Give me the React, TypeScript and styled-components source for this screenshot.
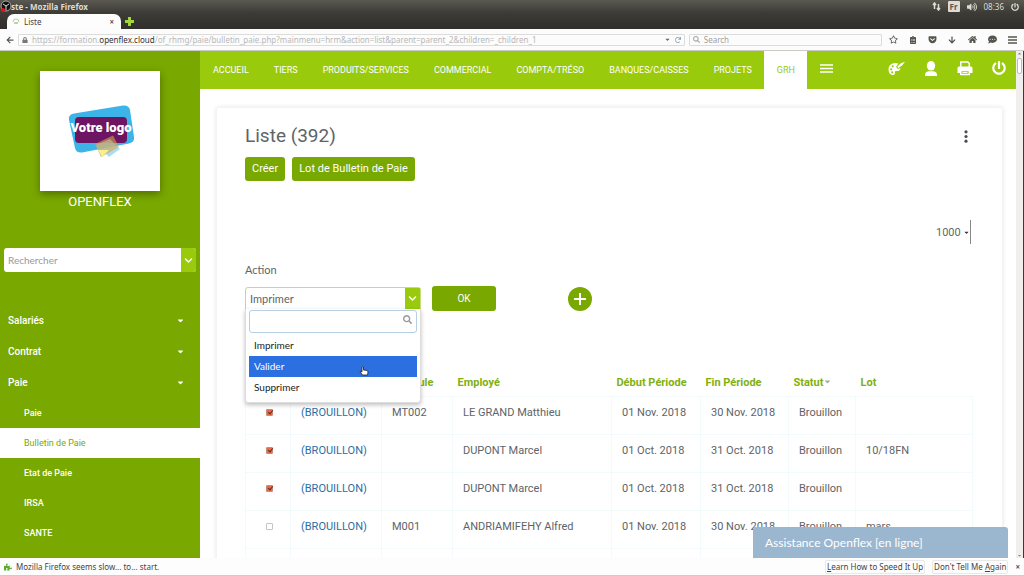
import React from "react";
import styled, { createGlobalStyle, css } from "styled-components";
import { FaArrowLeft, FaLock, FaSearch, FaRegStar, FaClipboardList, FaGetPocket, FaArrowDown, FaHome, FaPowerOff, FaVolumeUp, FaChevronDown, FaPlus, FaRedo, FaCaretDown, FaCaretUp, FaCommentDots, FaPuzzlePiece } from "react-icons/fa";

const green = "#79a800";
const lime = "#9aca0c";
const ui = `"Noto Sans", "Open Sans", sans-serif`;
const humanist = `Lato, "Open Sans", sans-serif`;

const Global = createGlobalStyle`
  * { box-sizing: border-box; }
  html, body { margin: 0; height: 100%; }
  #root { height: 100%; }
  body { font-family: Roboto, sans-serif; font-size: 11px; color: #5d6468; background: #fff; overflow: hidden; }
  button, input, select { font: inherit; color: inherit; margin: 0; padding: 0; border: 0; background: none; }
  button, select { cursor: pointer; }
  ul { list-style: none; margin: 0; padding: 0; }
  a { color: inherit; text-decoration: none; }
  svg { display: block; flex: none; }
`;

const Window = styled.div`
  height: 100vh;
  display: flex;
  flex-direction: column;
`;

/* Browser chrome */
const Titlebar = styled.header`
  background: linear-gradient(#5a5851, #3c3b36);
  color: #dfdbd2;
  display: flex;
  align-items: center;
  justify-content: space-between;
  height: 13px;
  padding: 0 5px 0 0;
  font: bold 8px/13px ${ui};
`;
const WindowTitle = styled.div`
  display: flex;
  align-items: center;
`;
const Indicators = styled.div`
  display: flex;
  align-items: center;
  gap: 7px;
  font-weight: 400;
`;
const Lang = styled.span`
  background: #dfdbd2;
  color: #555;
  border-radius: 1px;
  padding: 0 2px;
  font: bold 8px/11px ${ui};
`;
const TabStrip = styled.div`
  background: linear-gradient(#3c3b36, #302f2b);
  display: flex;
  align-items: center;
  gap: 4px;
  height: 16px;
  padding-left: 7px;
`;
const BrowserTab = styled.div`
  background: #fdfdfd;
  color: #444;
  border-radius: 7px 7px 0 0;
  display: flex;
  align-items: center;
  gap: 4px;
  width: 114px;
  height: 15px;
  margin-top: 1px;
  padding: 0 7px 0 5px;
  font: 8px/14px ${ui};
  span { flex: 1; }
`;
const Close = styled.button`
  font: bold 8px/10px ${ui};
  color: #555;
`;
const NavBar = styled.div`
  background: #fcfcfc;
  border-bottom: 1px solid #c9cbc4;
  display: flex;
  align-items: center;
  gap: 4px;
  height: 22px;
  padding: 0 7px 0 6px;
  color: #55554f;
`;
const Field = styled.label<{ $grow: number }>`
  flex: ${(p) => p.$grow} 1 0;
  display: flex;
  align-items: center;
  gap: 4px;
  height: 12px;
  border: 1px solid #dcdcdc;
  border-radius: 1px;
  padding: 0 3px;
  color: #a5a5a5;
  font: 8px/10px ${ui};
  white-space: nowrap;
  input { flex: 1; min-width: 0; outline: 0; }
  input::placeholder { color: #a0a0a0; opacity: 1; }
`;
const Url = styled.span`
  flex: 1;
  color: #b8b8b8;
  b { font-weight: 400; color: #333; }
`;
const Tools = styled.div`
  display: flex;
  justify-content: space-between;
  align-items: center;
  width: 128px;
  margin-left: 3px;
`;

/* Page */
const Page = styled.div`
  flex: 1;
  min-height: 0;
  display: flex;
  border-right: 1px solid #3a3935;
`;
const Sidebar = styled.aside`
  width: 200px;
  flex: none;
  overflow: hidden;
  background: ${green};
  color: #fff;
`;
const LogoCard = styled.div`
  width: 120px;
  margin: 20px auto 0;
  background: #fff;
  box-shadow: 0 3px 8px rgba(0, 0, 0, 0.35);
`;
const Brand = styled.div`
  text-align: center;
  font-size: 13px;
  line-height: 21px;
`;
const SearchBox = styled.div`
  display: flex;
  height: 24px;
  margin: 36px 4px 33px 4px;
  border-radius: 3px;
  overflow: hidden;
  background: #fff;
  input { flex: 1; min-width: 0; padding: 0 4px; font: 10px/24px ${humanist}; outline: 0; color: #777; }
  input::placeholder { color: #999; opacity: 1; }
`;
const Chevron = styled.button`
  width: 15px;
  background: ${lime};
  color: #fff;
  display: grid;
  place-items: center;
`;
const MenuItem = styled.button`
  display: flex;
  width: 100%;
  align-items: center;
  justify-content: space-between;
  padding: 0 15px 0 8px;
  font-size: 10px;
  font-weight: 500;
  line-height: 31px;
`;
const SubLink = styled.a<{ $active?: boolean }>`
  display: block;
  padding-left: 24px;
  font-size: 9px;
  font-weight: 500;
  line-height: 30px;
  ${(p) => p.$active && css`background: #fff; color: ${green}; font-weight: 400;`}
`;

const Main = styled.div`
  flex: 1;
  min-width: 0;
  display: flex;
  flex-direction: column;
  position: relative;
  overflow: hidden;
`;
const TopBar = styled.nav`
  flex: none;
  display: flex;
  align-items: stretch;
  height: 38px;
  background: ${lime};
  color: #fff;
  padding-right: 10px;
`;
const TopLink = styled.a<{ $active?: boolean }>`
  padding: 0 12px 0 13px;
  font-size: 9px;
  line-height: 38px;
  white-space: nowrap;
  ${(p) => p.$active && css`background: #fff; color: ${lime};`}
`;
const IconButton = styled.button`
  display: grid;
  place-items: center;
`;
const Burger = styled(IconButton)`
  margin: 0 auto 4px 13px;
`;
const TopIcons = styled.div`
  display: flex;
  align-items: center;
  gap: 19px;
  margin-bottom: 4px;
`;
const Card = styled.main`
  flex: 1;
  margin: 18px 13px 0 16px;
  padding: 15px 29px 0 28px;
  border: 1px solid #f4f4f6;
  border-bottom: 0;
  border-radius: 3px 3px 0 0;
  box-shadow: 0 0 4px rgba(60, 60, 90, 0.12);
`;
const CardHead = styled.div`
  display: flex;
  align-items: center;
  justify-content: space-between;
  h1 { margin: 0; font-size: 19px; font-weight: 400; line-height: 26px; }
`;
const Buttons = styled.div`
  display: flex;
  gap: 7px;
  margin-top: 8px;
`;
const Button = styled.button<{ $wide?: boolean }>`
  background: ${green};
  color: #fff;
  border-radius: 3px;
  padding: 0 7px;
  font-size: 11px;
  line-height: 24px;
  ${(p) => p.$wide && css`width: 64px; font-size: 10px; line-height: 25px;`}
`;
const PageSize = styled.div`
  display: flex;
  justify-content: flex-end;
  margin-top: 39px;
`;
const SizeSelect = styled.label`
  display: flex;
  align-items: center;
  height: 24px;
  margin-right: 2px;
  border-right: 1px solid #888;
  color: #333;
  select { appearance: none; width: 27px; font-size: 11px; color: #666; outline: 0; }
`;
const ActionLabel = styled.label`
  display: block;
  margin-top: 17px;
  font: 11px/18px ${humanist};
`;
const ActionRow = styled.div`
  display: flex;
  align-items: center;
  margin-top: 7px;
`;
const Combo = styled.div`
  position: relative;
  width: 176px;
  height: 23px;
  margin-right: 11px;
  display: flex;
  border: 1px solid #c4dd7c;
  border-radius: 3px 3px 0 0;
  select { appearance: none; flex: 1; padding: 0 4px; font: 11px/21px ${humanist}; outline: 0; }
`;
const Dropdown = styled.div`
  position: absolute;
  z-index: 2;
  top: 21px;
  left: -1px;
  right: -1px;
  padding: 1px 3px 4px;
  background: #fff;
  color: #222;
  border: 1px solid #ddd;
  border-top: 0;
  border-radius: 0 0 3px 3px;
  box-shadow: 0 2px 4px rgba(0, 0, 0, 0.25);
`;
const Filter = styled.label`
  display: flex;
  align-items: center;
  height: 23px;
  margin-bottom: 2px;
  padding: 0 4px;
  border: 1px solid #b7cfe0;
  border-radius: 3px;
  color: #999;
  input { flex: 1; min-width: 0; outline: 0; }
  svg { transform: translateY(-2px); }
`;
const Option = styled.li<{ $active?: boolean }>`
  padding: 0 5px;
  font: 10px/21px ${humanist};
  ${(p) => p.$active && css`background: #2b6fe0; color: #fff;`}
`;
const Pointer = styled.svg`
  position: absolute;
  top: 57px;
  left: 113px;
`;
const AddButton = styled(IconButton)`
  width: 24px;
  height: 24px;
  margin-left: 72px;
  border-radius: 50%;
  background: ${green};
  color: #fff;
`;
const Table = styled.table`
  width: 100%;
  margin-top: 58px;
  table-layout: fixed;
  border-collapse: collapse;
`;
const Th = styled.th`
  height: 27px;
  padding: 0 0 0 5px;
  text-align: left;
  font-size: 11px;
  font-weight: 700;
  color: #7fb010;
  white-space: nowrap;
  svg { display: inline; color: #aaa; }
`;
const Td = styled.td<{ $center?: boolean }>`
  height: 38px;
  padding: 0 0 4px 10px;
  border: 1px solid #f3fafc;
  font: 11px/14px Roboto, sans-serif;
  white-space: nowrap;
  ${(p) => p.$center && css`text-align: center; padding: 0 0 4px 3px;`}
  a { color: #2e6da4; }
`;
const Tick = styled.input`
  appearance: none;
  display: inline-block;
  position: relative;
  width: 7px;
  height: 7px;
  border: 1px solid #c4c4c4;
  border-radius: 1px;
  background: #fff;
  &:checked { background: #ea6a45; border-color: #c98a78; }
  &:checked::after {
    content: "";
    position: absolute;
    top: -1px;
    left: 2px;
    width: 2px;
    height: 4px;
    border: solid #6b2a1a;
    border-width: 0 1px 1px 0;
    transform: rotate(40deg);
  }
`;
const Assistance = styled.button`
  position: absolute;
  right: 8px;
  bottom: 0;
  z-index: 3;
  width: 255px;
  height: 31px;
  padding-left: 12px;
  text-align: left;
  border-radius: 3px 3px 0 0;
  background: #9bb6cf;
  color: #fff;
  font: 12px/31px ${humanist};
`;
const Scrollbar = styled.div`
  width: 7px;
  flex: none;
  display: flex;
  flex-direction: column;
  align-items: center;
  background: #f0efed;
  color: #888;
`;
const Thumb = styled.div`
  width: 5px;
  height: 16px;
  margin: 2px 0 auto;
  border: 1px solid #bbb;
  border-radius: 2px;
  background: #fff;
`;
const StatusBar = styled.footer`
  display: flex;
  align-items: center;
  gap: 7px;
  height: 18px;
  padding: 0 4px;
  border-bottom: 1px solid #ccc;
  background: #fdfdfd;
  color: #444;
  font: 8px/14px ${ui};
  p { flex: 1; margin: 0 0 0 -3px; }
`;
const StatusButton = styled.button`
  padding: 0 1px;
  border: 1px solid #e8e8e8;
  border-radius: 2px;
  line-height: 12px;
`;

const nav = ["ACCUEIL", "TIERS", "PRODUITS/SERVICES", "COMMERCIAL", "COMPTA/TRÉSO", "BANQUES/CAISSES", "PROJETS", "GRH"];
const menu = ["Salariés", "Contrat", "Paie"];
const sub = ["Paie", "Bulletin de Paie", "Etat de Paie", "IRSA", "SANTE"];
const columns = [
  { label: "", width: 45 }, { label: "", width: 91 }, { label: "Matricule", width: 71 }, { label: "Employé", width: 159 },
  { label: "Début Période", width: 89 }, { label: "Fin Période", width: 88 }, { label: "Statut", width: 67 }, { label: "Lot", width: 117 },
];
const total = columns.reduce((sum, c) => sum + c.width, 0);
const rows = [
  { on: true, mat: "MT002", name: "LE GRAND Matthieu", start: "01 Nov. 2018", end: "30 Nov. 2018", lot: "" },
  { on: true, mat: "", name: "DUPONT Marcel", start: "01 Oct. 2018", end: "31 Oct. 2018", lot: "10/18FN" },
  { on: true, mat: "", name: "DUPONT Marcel", start: "01 Oct. 2018", end: "31 Oct. 2018", lot: "" },
  { on: false, mat: "M001", name: "ANDRIAMIFEHY Alfred", start: "01 Nov. 2018", end: "30 Nov. 2018", lot: "mars" },
  { on: false, mat: "", name: "", start: "", end: "", lot: "" },
];

const Logo = () => (
  <svg width="120" height="120" viewBox="0 0 120 120" role="img" aria-label="Votre logo">
    <path d="M34 42.500 L83 34.500 Q89 34 90 39 L94 66 Q95 71 89 72.500 L42 81.500 Q36 82 35 77 L29 49 Q28 43.500 34 42.500Z" fill="#3cb4e8" />
    <rect x="35" y="46" width="52" height="26" rx="4" fill="#6d1463" />
    <path d="M61 86 L56 74 L70 68 L80 78 L69 86 L66 83Z" fill="#8fd0ea" opacity=".75" />
    <path d="M55 73 L73 64.500 L79 76 L61 86Z" fill="#d9a550" opacity=".6" />
    <path d="M58 79 L69 79 L62 86Z" fill="#f6f08f" />
    <text x="61" y="61" textAnchor="middle" fontFamily="Roboto, sans-serif" fontWeight="900" fontSize="13" fill="#fff">Votre logo</text>
  </svg>
);

const tools = [
  { label: "Bookmark", icon: <FaRegStar size={9} /> },
  { label: "Library", icon: <FaClipboardList size={8} /> },
  { label: "Pocket", icon: <FaGetPocket size={9} /> },
  { label: "Downloads", icon: <FaArrowDown size={8} /> },
  { label: "Home", icon: <FaHome size={9} /> },
  { label: "Chat", icon: <FaCommentDots size={9} /> },
  { label: "Menu", icon: <svg width="9" height="8" viewBox="0 0 9 8"><path d="M0 1h9M0 4h9M0 7h9" stroke="currentColor" strokeWidth="1.500" /></svg> },
];

export default function App() {
  return (
    <Window>
      <Global />
      <Titlebar>
        <WindowTitle>
          <svg width="11" height="13" viewBox="0 0 11 13"><circle cx="6" cy="6" r="5" fill="#111" stroke="#aaa" /><path d="M3 4l3 2 3-2M6 6v4" stroke="#ddd" fill="none" /><circle cx="3" cy="10" r="2" fill="#e11" /></svg>
          ste - Mozilla Firefox
        </WindowTitle>
        <Indicators>
          <svg width="9" height="9" viewBox="0 0 9 9" fill="none" stroke="currentColor" strokeWidth="1.5"><path d="M2.500 7V1M1 3l1.500-2L4 3M6.500 2v6M5 6l1.500 2L8 6" /></svg>
          <Lang>Fr</Lang>
          <FaVolumeUp size={10} />
          <span>08:36</span>
          <FaPowerOff size={8} />
        </Indicators>
      </Titlebar>
      <TabStrip>
        <BrowserTab>
          <svg width="8" height="7" viewBox="0 0 8 7"><path d="M1 4Q1 1 4 1T7 4" fill="none" stroke="#b6c8a2" /><path d="M2 5h4" stroke="#74ad3d" /></svg>
          <span>Liste</span>
          <Close aria-label="Close tab">×</Close>
        </BrowserTab>
        <svg width="9" height="9" viewBox="0 0 9 9"><path d="M3 0h3v3h3v3H6v3H3V6H0V3h3z" fill="#a4d63a" /></svg>
      </TabStrip>
      <NavBar>
        <FaArrowLeft size={8} />
        <Field as="div" $grow={64}>
          <FaLock size={6} color="#777" />
          <Url>https://formation.<b>openflex.cloud</b>/of_rhmg/paie/bulletin_paie.php?mainmenu=hrm&amp;action=list&amp;parent=parent_2&amp;children=_children_1</Url>
          <FaCaretDown size={7} color="#666" />
          <FaRedo size={6} color="#8aa0b8" />
        </Field>
        <Field $grow={18}>
          <FaSearch size={7} />
          <input placeholder="Search" aria-label="Search" />
        </Field>
        <Tools>
          {tools.map((t) => <IconButton key={t.label} aria-label={t.label}>{t.icon}</IconButton>)}
        </Tools>
      </NavBar>

      <Page>
        <Sidebar>
          <LogoCard><Logo /></LogoCard>
          <Brand>OPENFLEX</Brand>
          <SearchBox>
            <input placeholder="Rechercher" aria-label="Rechercher" />
            <Chevron aria-label="Ouvrir"><FaChevronDown size={9} /></Chevron>
          </SearchBox>
          {menu.map((m) => (
            <MenuItem key={m}>{m}<FaCaretDown size={9} /></MenuItem>
          ))}
          {sub.map((s) => (
            <SubLink key={s} href="#" $active={s === "Bulletin de Paie"}>{s}</SubLink>
          ))}
        </Sidebar>

        <Main>
          <TopBar>
            {nav.map((n) => <TopLink key={n} href="#" $active={n === "GRH"}>{n}</TopLink>)}
            <Burger aria-label="Menu">
              <svg width="13" height="9" viewBox="0 0 13 9"><path d="M0 1h13M0 4.500h13M0 8h13" stroke="currentColor" strokeWidth="1.500" /></svg>
            </Burger>
            <TopIcons>
              <IconButton aria-label="Thème">
                <svg width="17" height="15" viewBox="0 0 17 15" fill="currentColor">
                  <path fillRule="evenodd" d="M7.500 2C3.500 2 .5 4.800 .5 8.500c0 3 1.800 5.500 4.500 5.500 1.800 0 2-1 1.800-2.200-.2-1.300.7-2 2.200-1.800C11 10.300 12.500 9 12.300 7L10 8 8 6l2.300-3.500Q9 2 7.500 2zM3.200 7.200a1.100 1.100 0 110 2.200 1.100 1.100 0 010-2.200zm1.500-3a1.100 1.100 0 110 2.200 1.100 1.100 0 010-2.200zM4.200 10.300a1.100 1.100 0 110 2.200 1.100 1.100 0 010-2.200z" />
                  <path d="M17 .8L12.800 2.200 9.200 5.800l1.300 1.300L14.500 4z" />
                </svg>
              </IconButton>
              <IconButton aria-label="Profil">
                <svg width="14" height="15" viewBox="0 0 14 15" fill="currentColor"><ellipse cx="7" cy="4.800" rx="4.200" ry="4.800" /><path d="M1 15v-1.500Q1 11 4.500 10.200h5Q13 11 13 13.500V15z" /></svg>
              </IconButton>
              <IconButton aria-label="Imprimer">
                <svg width="16" height="15" viewBox="0 0 16 15">
                  <path d="M3.800 6V1h7l1.500 1.500V6" fill="none" stroke="currentColor" strokeWidth="1.500" />
                  <path d="M2 5.500h12q1.500 0 1.500 1.500v5h-12H.5V7Q.5 5.500 2 5.500z" fill="currentColor" />
                  <path d="M3.800 9.500h8.500v4H3.800z" fill={lime} stroke="currentColor" strokeWidth="1.500" />
                  <path d="M5.500 11.500h5" stroke="currentColor" />
                </svg>
              </IconButton>
              <IconButton aria-label="Quitter"><FaPowerOff size={14} /></IconButton>
            </TopIcons>
          </TopBar>

          <Card>
            <CardHead>
              <h1>Liste (392)</h1>
              <IconButton aria-label="Options">
                <svg width="14" height="13" viewBox="0 0 14 13" fill="#4a4f55"><circle cx="7" cy="1.800" r="1.600" /><circle cx="7" cy="6.500" r="1.600" /><circle cx="7" cy="11.200" r="1.600" /></svg>
              </IconButton>
            </CardHead>
            <Buttons><Button>Créer</Button><Button>Lot de Bulletin de Paie</Button></Buttons>
            <PageSize>
              <SizeSelect>
                <select aria-label="Lignes par page"><option>1000</option></select>
                <FaCaretDown size={7} />
              </SizeSelect>
            </PageSize>
            <ActionLabel htmlFor="action">Action</ActionLabel>
            <ActionRow>
              <Combo>
                <select id="action"><option>Imprimer</option></select>
                <Chevron aria-label="Ouvrir les actions"><FaChevronDown size={9} /></Chevron>
                <Dropdown>
                  <Filter><input aria-label="Filtrer" /><FaSearch size={9} /></Filter>
                  <ul role="listbox" aria-label="Actions">
                    <Option role="option">Imprimer</Option>
                    <Option role="option" $active>Valider</Option>
                    <Option role="option">Supprimer</Option>
                  </ul>
                  <Pointer width="10" height="10" viewBox="0 0 9 10"><path d="M2.500 1q1-1 1.500 0v3l3.500.5q1 .3 1 1.500L8 9H3L.5 5.500q1-.8 2 .5z" fill="#fff" stroke="#222" strokeWidth=".8" /></Pointer>
                </Dropdown>
              </Combo>
              <Button $wide>OK</Button>
              <AddButton aria-label="Ajouter">
                <svg width="12" height="12" viewBox="0 0 12 12"><path d="M6 0v12M0 6h12" stroke="currentColor" strokeWidth="2" /></svg>
              </AddButton>
            </ActionRow>
            <Table>
              <colgroup>{columns.map((c, i) => <col key={i} style={{ width: `${(c.width / total) * 100}%` }} />)}</colgroup>
              <thead>
                <tr>{columns.map((c, i) => <Th key={i}>{c.label}{c.label === "Statut" && <FaCaretDown size={9} />}</Th>)}</tr>
              </thead>
              <tbody>
                {rows.map((r, i) => (
                  <tr key={i}>
                    <Td $center>{r.name && <Tick type="checkbox" defaultChecked={r.on} aria-label={r.name} />}</Td>
                    <Td>{r.name && <a href="#">(BROUILLON)</a>}</Td>
                    <Td>{r.mat}</Td>
                    <Td>{r.name}</Td>
                    <Td>{r.start}</Td>
                    <Td>{r.end}</Td>
                    <Td>{r.name && "Brouillon"}</Td>
                    <Td>{r.lot}</Td>
                  </tr>
                ))}
              </tbody>
            </Table>
          </Card>
          <Assistance>Assistance Openflex [en ligne]</Assistance>
        </Main>
        <Scrollbar><FaCaretUp size={5} /><Thumb /><FaCaretDown size={5} /></Scrollbar>
      </Page>

      <StatusBar>
        <FaPuzzlePiece size={8} color="#5cab2c" />
        <p>Mozilla Firefox seems slow... to... start.</p>
        <StatusButton><u>L</u>earn How to Speed It Up</StatusButton>
        <StatusButton>Don't Tell Me <u>A</u>gain</StatusButton>
        <Close aria-label="Dismiss">×</Close>
      </StatusBar>
    </Window>
  );
}
